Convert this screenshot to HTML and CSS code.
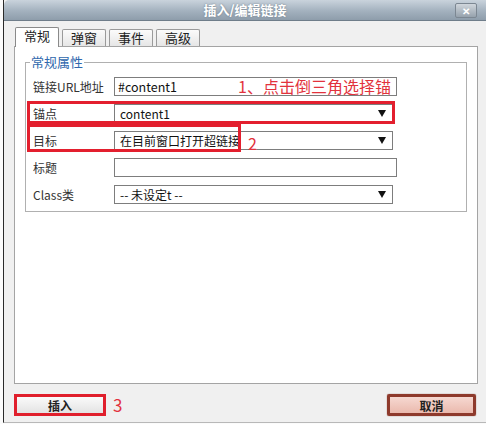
FILE: index.html
```html
<!DOCTYPE html>
<html lang="zh-CN">
<head>
    <meta charset="UTF-8">
    <title>插入/编辑链接</title>
    <link rel="stylesheet" href="styles.css">
</head>
<body>
    <div class="win">
        <div class="titlebar">
            <span class="title">插入/编辑链接</span>
            <span class="close">✕</span>
        </div>

        <div class="tabs">
            <div class="tab active">常规</div>
            <div class="tab">弹窗</div>
            <div class="tab">事件</div>
            <div class="tab">高级</div>
        </div>

        <div class="panel">
            <fieldset class="group">
                <legend>常规属性</legend>
                <div class="row">
                    <label>链接URL地址</label>
                    <div class="input">#content1</div>
                    <span class="note note1">1、点击倒三角选择锚</span>
                </div>
                <div class="row">
                    <label>锚点</label>
                    <div class="select"><span>content1</span><span class="arrow"></span></div>
                    <span class="mark mark1"></span>
                </div>
                <div class="row">
                    <label>目标</label>
                    <div class="select"><span>在目前窗口打开超链接</span><span class="arrow"></span></div>
                    <span class="mark mark2"></span>
                    <span class="note note2">2</span>
                </div>
                <div class="row">
                    <label>标题</label>
                    <div class="input"></div>
                </div>
                <div class="row">
                    <label>Class类</label>
                    <div class="select"><span>-- 未设定t --</span><span class="arrow"></span></div>
                </div>
            </fieldset>
        </div>

        <div class="buttons">
            <div class="left">
                <button type="button" class="btn btn-insert">插入</button>
                <span class="note3">3</span>
            </div>
            <button type="button" class="btn btn-cancel">取消</button>
        </div>
    </div>
</body>
</html>
```

FILE: styles.css
```css
body {
    margin: 0;
    padding: 0;
    background-color: #fbfbfb;
    font-family: "Noto Sans CJK SC", "Noto Sans", sans-serif;
    font-size: 12px;
    color: #222;
}
.win {
    margin-left: 3px;
    height: 423px;
    border-left: 1px solid #2a2a2a;
    border-bottom: 1px solid #b8b8b8;
    background-color: #f0f0f0;
    box-sizing: border-box;
}
.titlebar {
    position: relative;
    height: 21px;
    background: linear-gradient(#c9d3dc, #a3b1be 55%, #8e9dab);
    border-bottom: 1px solid #6f7d8a;
    border-top-left-radius: 5px;
    box-sizing: border-box;
    text-align: center;
}
.title {
    color: #ffffff;
    font-weight: bold;
    font-size: 13px;
    line-height: 20px;
    text-shadow: 0 0 2px #6d7b88;
}
.close {
    position: absolute;
    top: 3px;
    right: 9px;
    width: 20px;
    height: 13px;
    border: 1px solid #7c8792;
    border-radius: 2px;
    background: linear-gradient(#d0d6dc, #96a2ad);
    color: #ffffff;
    font-size: 10px;
    font-weight: bold;
    line-height: 13px;
    text-align: center;
}
.tabs {
    display: flex;
    align-items: flex-end;
    gap: 3px;
    margin: 6px 0 0 11px;
    height: 19px;
}
.tab {
    width: 42px;
    height: 16px;
    border: 1px solid #9a9a9a;
    border-bottom: none;
    border-radius: 2px 2px 0 0;
    background: linear-gradient(#fbfbfb, #e6e6e6);
    font-size: 13px;
    line-height: 16px;
    text-align: center;
    color: #222;
}
.tab.active {
    height: 19px;
    margin-bottom: -1px;
    background: #ffffff;
    border-color: #8a8a8a;
    position: relative;
    z-index: 1;
}
.panel {
    margin-left: 10px;
    width: 464px;
    height: 338px;
    border: 1px solid #a4a4a4;
    background-color: #ffffff;
    box-sizing: border-box;
    padding: 7px 10px 0 10px;
}
.group {
    margin: 0;
    padding: 0 8px 3px 4px;
    border: 1px solid #b0b0b0;
}
.group legend {
    padding: 0 1px;
    color: #2f68ad;
    font-size: 13px;
    line-height: 16px;
}
.row {
    position: relative;
    display: flex;
    align-items: center;
    height: 27px;
}
.row:first-of-type {
    margin-top: 3px;
}
.row label {
    width: 84px;
    padding-left: 3px;
    font-size: 12px;
    color: #333;
    box-sizing: border-box;
}
.input, .select {
    height: 19px;
    border: 1px solid #7d7d7d;
    background-color: #ffffff;
    box-sizing: border-box;
    font-size: 12px;
    line-height: 17px;
    color: #111;
}
.input {
    width: 283px;
    padding-left: 3px;
    font-size: 12.5px;
}
.select {
    display: flex;
    justify-content: space-between;
    align-items: center;
    width: 279px;
    padding: 0 6px 0 5px;
}
.arrow {
    width: 0;
    height: 0;
    border-left: 4px solid transparent;
    border-right: 4px solid transparent;
    border-top: 7px solid #111;
}
.mark {
    position: absolute;
    border: 3px solid #e31f2e;
    box-sizing: border-box;
}
.mark1 {
    left: -3px;
    top: 1px;
    width: 368px;
    height: 23px;
}
.mark2 {
    left: -3px;
    top: -3px;
    width: 214px;
    height: 28px;
}
.note {
    position: absolute;
    color: #e2323c;
    font-size: 16px;
}
.note1 {
    left: 208px;
    top: 3px;
    line-height: 20px;
}
.note2 {
    left: 218px;
    top: 6px;
    line-height: 20px;
}
.buttons {
    display: flex;
    justify-content: space-between;
    align-items: center;
    margin: 8px 10px 0 10px;
}
.left {
    display: flex;
    align-items: center;
}
.btn {
    height: 22px;
    font-family: "Noto Sans CJK SC", sans-serif;
    font-size: 12px;
    font-weight: bold;
    color: #222;
    padding: 0;
    cursor: pointer;
}
.btn-insert {
    width: 92px;
    border: 3px solid #e01f2c;
    background: linear-gradient(#fafafa, #e3e3e3);
}
.note3 {
    margin-left: 7px;
    color: #e2323c;
    font-size: 17px;
}
.btn-cancel {
    width: 89px;
    border: 3px solid #8e3a2c;
    border-radius: 2px;
    background: linear-gradient(#f6d8d1, #eab9ad);
    box-shadow: 0 0 1px #6d2a1e;
}
```
